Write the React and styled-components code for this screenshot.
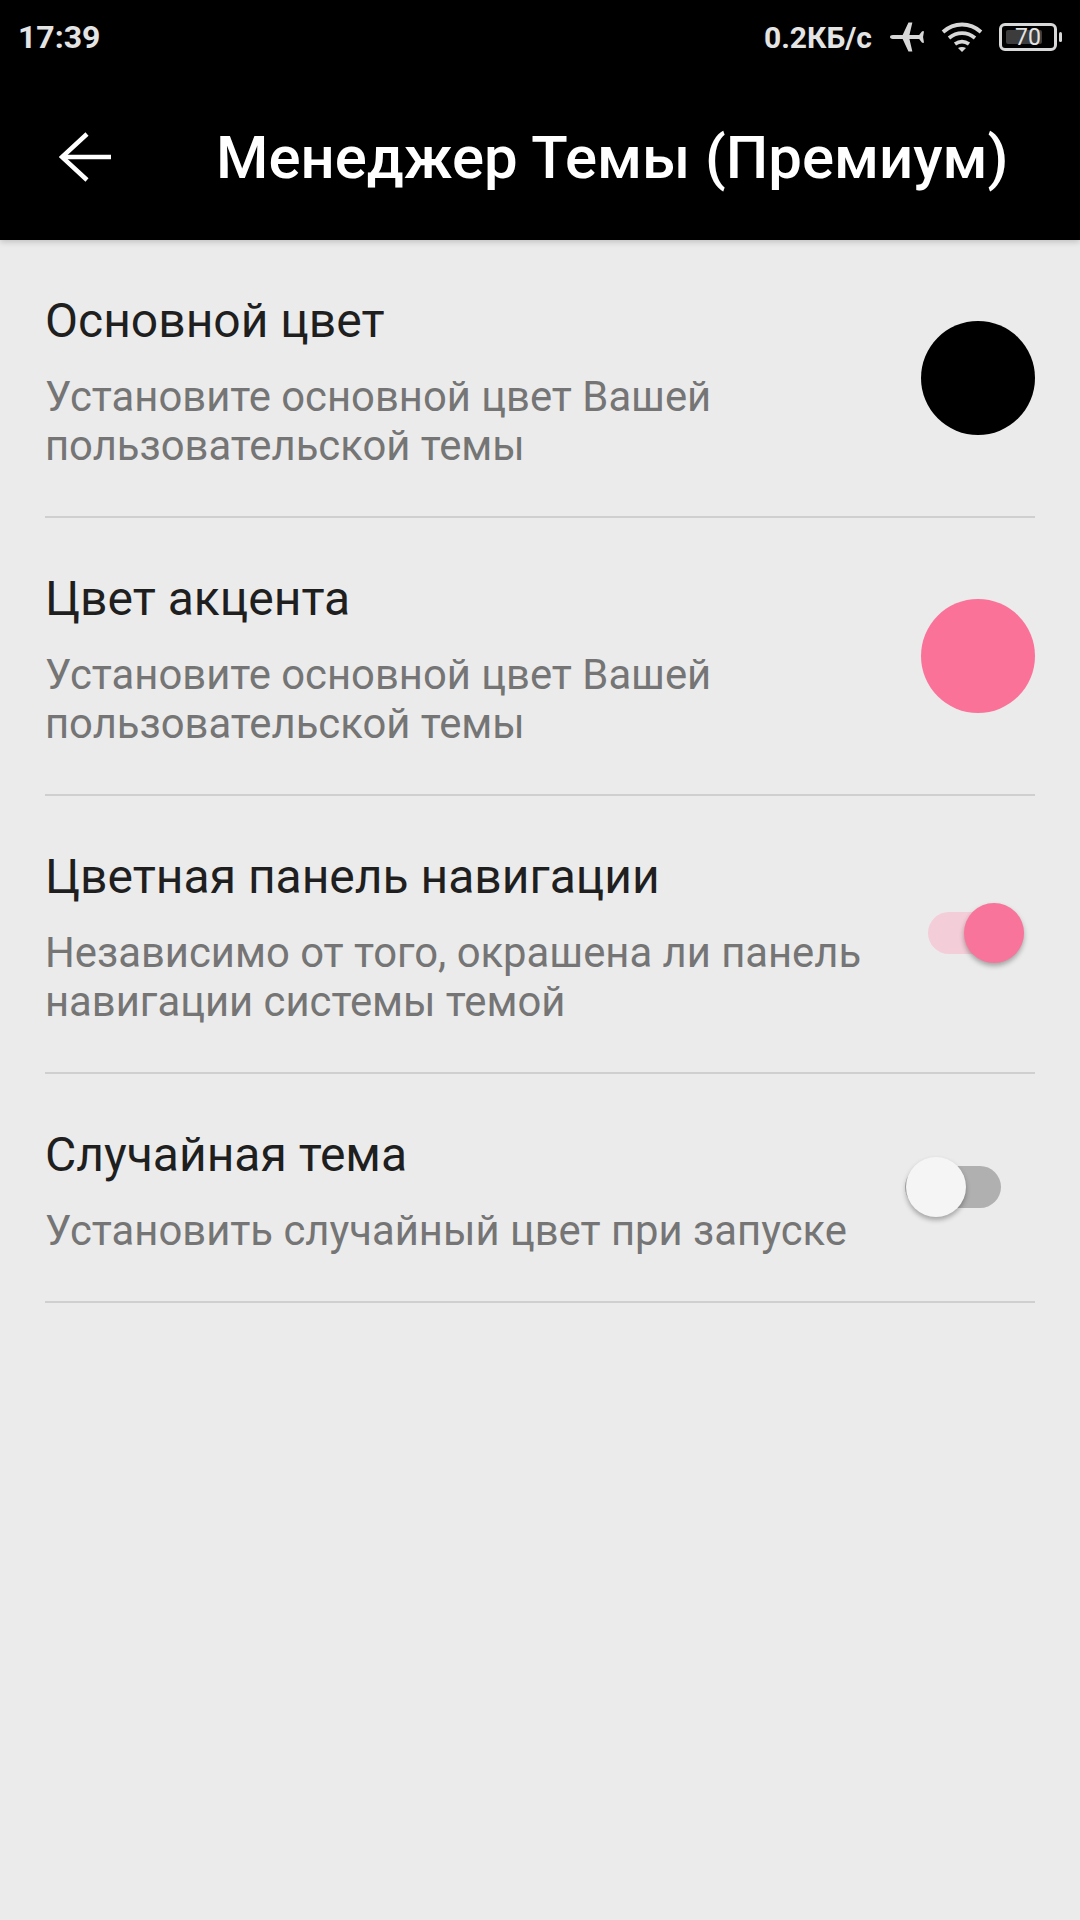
import React from "react";
import styled, { createGlobalStyle } from "styled-components";

const Global = createGlobalStyle`
  html, body { margin: 0; padding: 0; background: #ebebeb; }
  body { font-family: Roboto, "Noto Sans", sans-serif; }
`;

const Page = styled.div`
  width: 1080px;
  height: 1920px;
  background: #ebebeb;
  overflow: hidden;
`;

const Top = styled.header`
  height: 240px;
  background: #000;
  box-shadow: 0 2px 6px rgba(0, 0, 0, 0.18);
  display: flex;
  flex-direction: column;
`;

const StatusBar = styled.div`
  height: 74px;
  display: flex;
  align-items: center;
  padding: 0 23px 0 18px;
  color: #e4e4e4;
  font-size: 30px;
  font-weight: 700;
`;

const Clock = styled.span`
  font-size: 32px;
`;

const Speed = styled.span`
  margin-left: auto;
  margin-right: 18px;
`;

const StatusIcons = styled.div`
  display: flex;
  align-items: center;
  gap: 16px;
`;

const BatteryBox = styled.div`
  position: relative;
  width: 58px;
  height: 28px;
  box-sizing: border-box;
  border: 3px solid #d8d8d8;
  border-radius: 6px;
  display: flex;
  align-items: center;
  justify-content: center;
  color: #e4e4e4;
  font-size: 23px;
  font-weight: 400;
  &::before {
    content: "";
    position: absolute;
    left: 4px;
    top: 4px;
    bottom: 4px;
    width: 36px;
    background: #3c3c3c;
    border-radius: 2px;
  }
  &::after {
    content: "";
    position: absolute;
    right: -8px;
    top: 6px;
    width: 3px;
    height: 10px;
    background: #d8d8d8;
    border-radius: 2px;
  }
`;

const BatteryValue = styled.span`
  position: relative;
`;

const AppBar = styled.div`
  flex: 1;
  display: flex;
  align-items: center;
`;

const BackButton = styled.div`
  width: 216px;
  padding-left: 59px;
  box-sizing: border-box;
  display: flex;
`;

const Title = styled.h1`
  margin: 0;
  color: #fff;
  font-size: 59.9px;
  font-weight: 500;
  white-space: nowrap;
`;

const List = styled.div`
  padding: 0 45px;
`;

const Row = styled.div`
  display: flex;
  align-items: center;
  justify-content: space-between;
  height: ${(p) => p.$height}px;
  box-sizing: border-box;
  border-bottom: 2px solid #cfcfcf;
`;

const RowText = styled.div`
  display: flex;
  flex-direction: column;
  padding-top: 4px;
`;

const RowTitle = styled.div`
  color: #1f1f1f;
  font-size: 48px;
  line-height: 60px;
  margin-bottom: 21px;
`;

const RowSub = styled.div`
  color: #757575;
  font-size: 41.8px;
  line-height: 49px;
  white-space: pre-line;
`;

const Swatch = styled.div`
  width: 114px;
  height: 114px;
  border-radius: 50%;
  background: ${(p) => p.$color};
`;

const Switch = styled.div`
  position: relative;
  width: 96px;
  height: 42px;
  border-radius: 21px;
  background: ${(p) => (p.$on ? "#f3cdd8" : "#b0b0b0")};
  margin-right: ${(p) => (p.$on ? "11px" : "34px")};
  margin-bottom: 2px;
`;

const Knob = styled.div`
  position: absolute;
  top: -9px;
  ${(p) => (p.$on ? "right: 0;" : "left: 1px;")}
  width: 60px;
  height: 60px;
  border-radius: 50%;
  background: ${(p) => (p.$on ? "#f9749b" : "#f5f5f5")};
  box-shadow: 0 3px 5px rgba(0, 0, 0, 0.3);
`;

const rows = [
  { title: "Основной цвет", sub: "Установите основной цвет Вашей\nпользовательской темы", swatch: "#000", height: 278 },
  { title: "Цвет акцента", sub: "Установите основной цвет Вашей\nпользовательской темы", swatch: "#fb7299", height: 278 },
  { title: "Цветная панель навигации", sub: "Независимо от того, окрашена ли панель\nнавигации системы темой", on: true, height: 278 },
  { title: "Случайная тема", sub: "Установить случайный цвет при запуске", on: false, height: 229 },
];

const App = () => {
  return (
    <Page>
      <Global />
      <Top>
        <StatusBar>
          <Clock>17:39</Clock>
          <Speed>0.2КБ/с</Speed>
          <StatusIcons>
            <svg width="35" height="32" viewBox="0 0 36 32" fill="#d8d8d8">
              <path d="M0 16c0-1 1-2 3-2h10L19 1h4l-3 13h10l3-4h2l-1 6 1 6h-2l-3-4H20l3 13h-4l-6-13H3c-2 0-3-1-3-2z" />
            </svg>
            <svg width="42" height="32" viewBox="0 0 42 32" fill="none" stroke="#d8d8d8" strokeWidth="3.8">
              <path d="M2 11C13 1 29 1 40 11" />
              <path d="M8 17c8-6.500 18-6.500 26 0" />
              <path d="M14 23c4.500-3 9.500-3 14 0" />
              <path d="M21 31l-4-4c2.500-1.500 5.500-1.500 8 0z" fill="#d8d8d8" stroke="none" />
            </svg>
            <BatteryBox>
              <BatteryValue>70</BatteryValue>
            </BatteryBox>
          </StatusIcons>
        </StatusBar>
        <AppBar>
          <BackButton>
            <svg width="52" height="50" viewBox="0 0 52 50" fill="none" stroke="#fff" strokeWidth="4.500">
              <path d="M52 25H3" />
              <path d="M28 2L3 25l25 23" />
            </svg>
          </BackButton>
          <Title>Менеджер Темы (Премиум)</Title>
        </AppBar>
      </Top>
      <List>
        {rows.map((row) => (
          <Row key={row.title} $height={row.height}>
            <RowText>
              <RowTitle>{row.title}</RowTitle>
              <RowSub>{row.sub}</RowSub>
            </RowText>
            {row.swatch ? (
              <Swatch $color={row.swatch} />
            ) : (
              <Switch $on={row.on}>
                <Knob $on={row.on} />
              </Switch>
            )}
          </Row>
        ))}
      </List>
    </Page>
  );
};

export default App;
